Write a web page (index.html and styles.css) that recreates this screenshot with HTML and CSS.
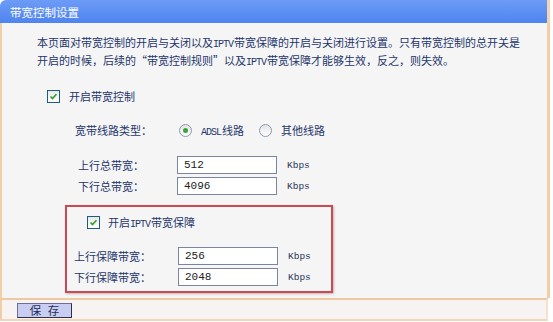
FILE: index.html
```html
<!DOCTYPE html>
<html lang="zh-CN">
<head>
<meta charset="utf-8">
<title>带宽控制设置</title>
<link rel="stylesheet" href="styles.css">
</head>
<body>
<div class="panel">
  <div class="title">带宽控制设置</div>
  <div class="content">
    <p class="desc">本页面对带宽控制的开启与关闭以及<span class="lat">IPTV</span>带宽保障的开启与关闭进行设置。只有带宽控制的总开关是<br>开启的时候，后续的“带宽控制规则”以及<span class="lat">IPTV</span>带宽保障才能够生效，反之，则失效。</p>
    <div class="check main-check">
      <span class="cb"><svg viewBox="0 0 13 13" width="13" height="13"><path d="M3 6.5 L5.3 9 L10 3.8" fill="none" stroke="#2f9a2f" stroke-width="1.8"/></svg></span>
      <span>开启带宽控制</span>
    </div>
    <div class="row type-row">
      <span class="lbl">宽带线路类型：</span>
      <span class="radio on"></span><span class="rtext"><span class="lat">ADSL</span>线路</span>
      <span class="radio"></span><span class="rtext">其他线路</span>
    </div>
    <div class="row first">
      <span class="lbl">上行总带宽：</span><span class="input">512</span><span class="unit">Kbps</span>
    </div>
    <div class="row">
      <span class="lbl">下行总带宽：</span><span class="input">4096</span><span class="unit">Kbps</span>
    </div>
    <div class="iptv">
      <div class="check iptv-check">
        <span class="cb"><svg viewBox="0 0 13 13" width="13" height="13"><path d="M3 6.5 L5.3 9 L10 3.8" fill="none" stroke="#2f9a2f" stroke-width="1.8"/></svg></span>
        <span class="ctext">开启<span class="lat">IPTV</span>带宽保障</span>
      </div>
      <div class="row first">
        <span class="lbl">上行保障带宽：</span><span class="input">256</span><span class="unit">Kbps</span>
      </div>
      <div class="row">
        <span class="lbl">下行保障带宽：</span><span class="input">2048</span><span class="unit">Kbps</span>
      </div>
    </div>
  </div>
  <div class="footer">
    <span class="save">保 存</span>
  </div>
</div>
</body>
</html>
```
FILE: styles.css
```css
html, body {
  margin: 0;
  padding: 0;
  background: #ffffff;
}
body {
  font-family: "Noto Sans CJK SC", "Noto Sans", sans-serif;
  font-size: 11px;
  color: #25356a;
}
.panel {
  width: 550px;
}
.title {
  height: 23px;
  line-height: 24px;
  padding-left: 10px;
  color: #ffffff;
  font-size: 11.5px;
  border-radius: 6px 0 0 0;
  background: linear-gradient(#6c9cf7, #4f84ef);
  border-right: 3px solid #f3d4ae;
}
.content {
  border-left: 2px solid #f0cfa4;
  border-right: 3px solid #f0cfa4;
  background: #f5f5f6;
  padding: 10px 0 5px 0;
}
.lat {
  font-family: "Liberation Mono", monospace;
  font-size: 10px;
  letter-spacing: -1px;
  line-height: 9px;
  vertical-align: baseline;
  margin-right: 1px;
}
.desc {
  margin: 0 0 0 35px;
  line-height: 18px;
  height: 36px;
  white-space: nowrap;
}
.check {
  display: flex;
  align-items: center;
  height: 18px;
}
.cb {
  width: 11px;
  height: 11px;
  border: 1px solid #1d5a86;
  background: linear-gradient(#e8e8e4, #ffffff);
  display: flex;
  align-items: center;
  justify-content: center;
}
.cb svg {
  width: 11px;
  height: 11px;
}
.main-check {
  margin: 18px 0 0 45px;
}
.main-check .cb {
  margin-right: 9px;
}
.row {
  display: flex;
  align-items: center;
  height: 18px;
  margin-top: 3px;
  margin-left: 76px;
}
.row .lbl {
  width: 99px;
}
.type-row {
  margin-top: 16px;
  margin-left: 73px;
}
.type-row .lbl {
  width: 104px;
}
.row.first {
  margin-top: 17px;
}
.radio {
  width: 11px;
  height: 11px;
  border: 1px solid #8c9cb0;
  border-radius: 50%;
  background: linear-gradient(#e4e4e4, #ffffff);
  position: relative;
  margin-right: 9px;
}
.radio.on::after {
  content: "";
  position: absolute;
  left: 3px;
  top: 3px;
  width: 5px;
  height: 5px;
  border-radius: 50%;
  background: #3aa43a;
}
.rtext {
  margin-right: 15px;
  line-height: 16px;
}
.ctext {
  line-height: 16px;
}
.input {
  box-sizing: border-box;
  width: 100px;
  height: 18px;
  border: 1px solid #7a86a0;
  background: #ffffff;
  font-family: "Liberation Mono", monospace;
  font-size: 11px;
  line-height: 16px;
  padding-left: 6px;
  color: #222;
}
.unit {
  margin-left: 10px;
  font-family: "Liberation Mono", monospace;
  font-size: 9.5px;
  color: #2a3558;
}
.iptv {
  margin: 10px 0 0 63px;
  width: 264px;
  border: 2px solid #c94a52;
  box-shadow: 1px 1px 2px rgba(120, 60, 60, 0.35);
  padding: 6px 0 5px 0;
}
.iptv-check {
  margin-left: 20px;
}
.iptv-check .cb {
  margin-right: 8px;
}
.iptv .row {
  margin-left: 7px;
}
.iptv .row .lbl {
  width: 104px;
}
.iptv .row.first {
  margin-top: 16px;
}
.footer {
  border-top: 2px solid #eec9a0;
  border-bottom: 2px solid #f3d6b6;
  border-left: 2px solid #f0cfa4;
  border-right: 2px solid #f6e2cc;
  width: 529px;
  background: #f7f3f3;
  height: 17px;
  padding: 2px 0 0 15px;
}
.save {
  display: inline-flex;
  align-items: center;
  justify-content: center;
  box-sizing: border-box;
  width: 55px;
  height: 15px;
  line-height: 13px;
  word-spacing: 4px;
  white-space: pre;
  background: #c9cdf2;
  border: 1px solid #6d6f98;
  border-right-color: #2d2f4d;
  border-bottom-color: #2d2f4d;
  font-size: 11.5px;
  color: #1f2f55;
}
```
